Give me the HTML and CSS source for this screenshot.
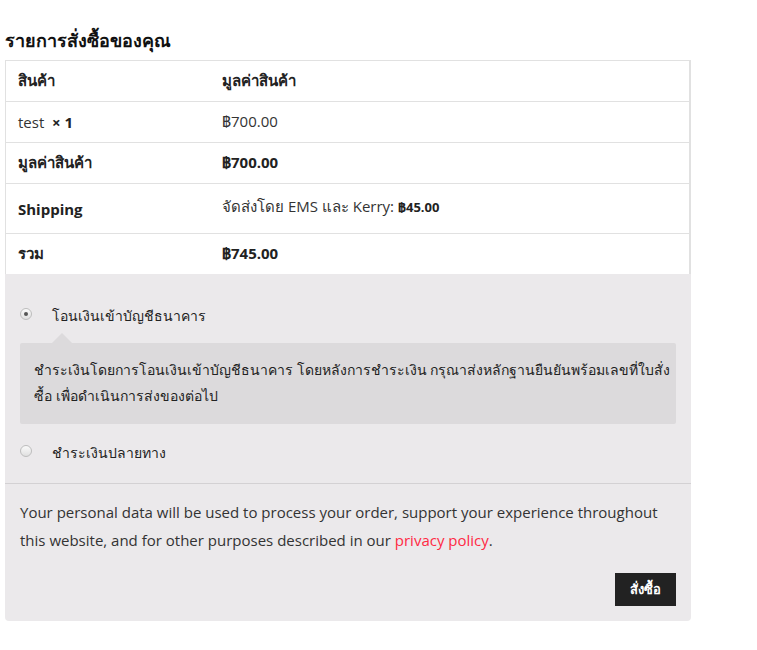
FILE: index.html
```html
<!DOCTYPE html>
<html lang="th">
<head>
<meta charset="utf-8">
<link rel="stylesheet" href="styles.css">
</head>
<body>
<div class="wrap">
  <h3 class="title">รายการสั่งซื้อของคุณ</h3>
  <table class="order">
    <thead>
      <tr><th class="c1">สินค้า</th><th>มูลค่าสินค้า</th></tr>
    </thead>
    <tbody>
      <tr><td class="c1">test&nbsp; <strong>× 1</strong></td><td>฿700.00</td></tr>
    </tbody>
    <tfoot>
      <tr><th class="c1">มูลค่าสินค้า</th><td><strong>฿700.00</strong></td></tr>
      <tr class="ship"><th class="c1">Shipping</th><td>จัดส่งโดย EMS และ Kerry: <strong class="small">฿45.00</strong></td></tr>
      <tr><th class="c1">รวม</th><td><strong>฿745.00</strong></td></tr>
    </tfoot>
  </table>
  <div class="payment">
    <ul class="methods">
      <li class="method">
        <label class="opt"><span class="radio on"></span>โอนเงินเข้าบัญชีธนาคาร</label>
        <div class="desc">ชำระเงินโดยการโอนเงินเข้าบัญชีธนาคาร โดยหลังการชำระเงิน กรุณาส่งหลักฐานยืนยันพร้อมเลขที่ใบสั่ง<br>ซื้อ เพื่อดำเนินการส่งของต่อไป</div>
      </li>
      <li class="method">
        <label class="opt"><span class="radio"></span>ชำระเงินปลายทาง</label>
      </li>
    </ul>
    <div class="place">
      <p class="privacy">Your personal data will be used to process your order, support your experience throughout this website, and for other purposes described in our <a href="#" class="link">privacy policy</a>.</p>
      <div class="actions"><button class="btn">สั่งซื้อ</button></div>
    </div>
  </div>
</div>
</body>
</html>
```
FILE: styles.css
```css
html, body { margin: 0; padding: 0; background: #fff; }
body {
  font-family: "Open Sans", sans-serif;
  font-size: 15px;
  color: #333;
}
.wrap { width: 686px; padding: 28px 0 0 5px; }
.title {
  margin: 0 0 8px;
  font-size: 18px;
  font-weight: 700;
  color: #111;
  line-height: 24px;
}
.order {
  width: 100%;
  border-collapse: collapse;
  border: 1px solid #e1e1e1;
  border-right-width: 2px;
}
.order th, .order td {
  text-align: left;
  padding: 0 12px;
  height: 40px;
  border-bottom: 1px solid #e1e1e1;
  vertical-align: middle;
  font-size: 15px;
  color: #333;
}
.order th { font-weight: 700; color: #222; }
.order .c1 { width: 180px; }
.order strong { color: #222; }
.order .ship th { height: 49px; }
.order .ship td { vertical-align: top; padding-top: 11px; height: 38px; }
.order .small { font-size: 13px; }
.payment {
  background: #ebe9eb;
  border-radius: 0 0 4px 4px;
  margin-top: -1px;
}
.methods { list-style: none; margin: 0; padding: 28px 15px 1px; border-bottom: 1px solid #d3d1d3; }
.method { margin-bottom: 15px; }
.opt {
  display: flex;
  align-items: center;
  font-size: 14px;
  color: #222;
  line-height: 28px;
}
.radio {
  width: 12px; height: 12px;
  border-radius: 50%;
  border: 1px solid #bdbdbd;
  background: linear-gradient(#fafafa, #e0e0e0);
  margin: -4px 20px 0 0;
  box-sizing: border-box;
  position: relative;
}
.radio.on::after {
  content: "";
  position: absolute;
  left: 3px; top: 3px;
  width: 4px; height: 4px;
  border-radius: 50%;
  background: #555;
}
.desc {
  position: relative;
  margin-top: 13px;
  background: #dcdadc;
  border-radius: 2px;
  padding: 14px 2px 15px 14px;
  font-size: 14px;
  line-height: 26px;
  color: #222;
}
.desc::before {
  content: "";
  position: absolute;
  top: -10px; left: 32px;
  border: 10px solid transparent;
  border-top: 0;
  border-bottom-color: #dcdadc;
}
.place { padding: 14px 15px 15px; }
.privacy { margin: 0; font-size: 15px; line-height: 28px; color: #333; }
.link { color: #ff2a44; text-decoration: none; }
.actions { display: flex; justify-content: flex-end; margin-top: 19px; }
.btn {
  background: #222;
  color: #fff;
  border: 0;
  border-radius: 0;
  font-family: inherit;
  font-weight: 700;
  font-size: 13px;
  height: 33px;
  padding: 0 15px;
}
```
